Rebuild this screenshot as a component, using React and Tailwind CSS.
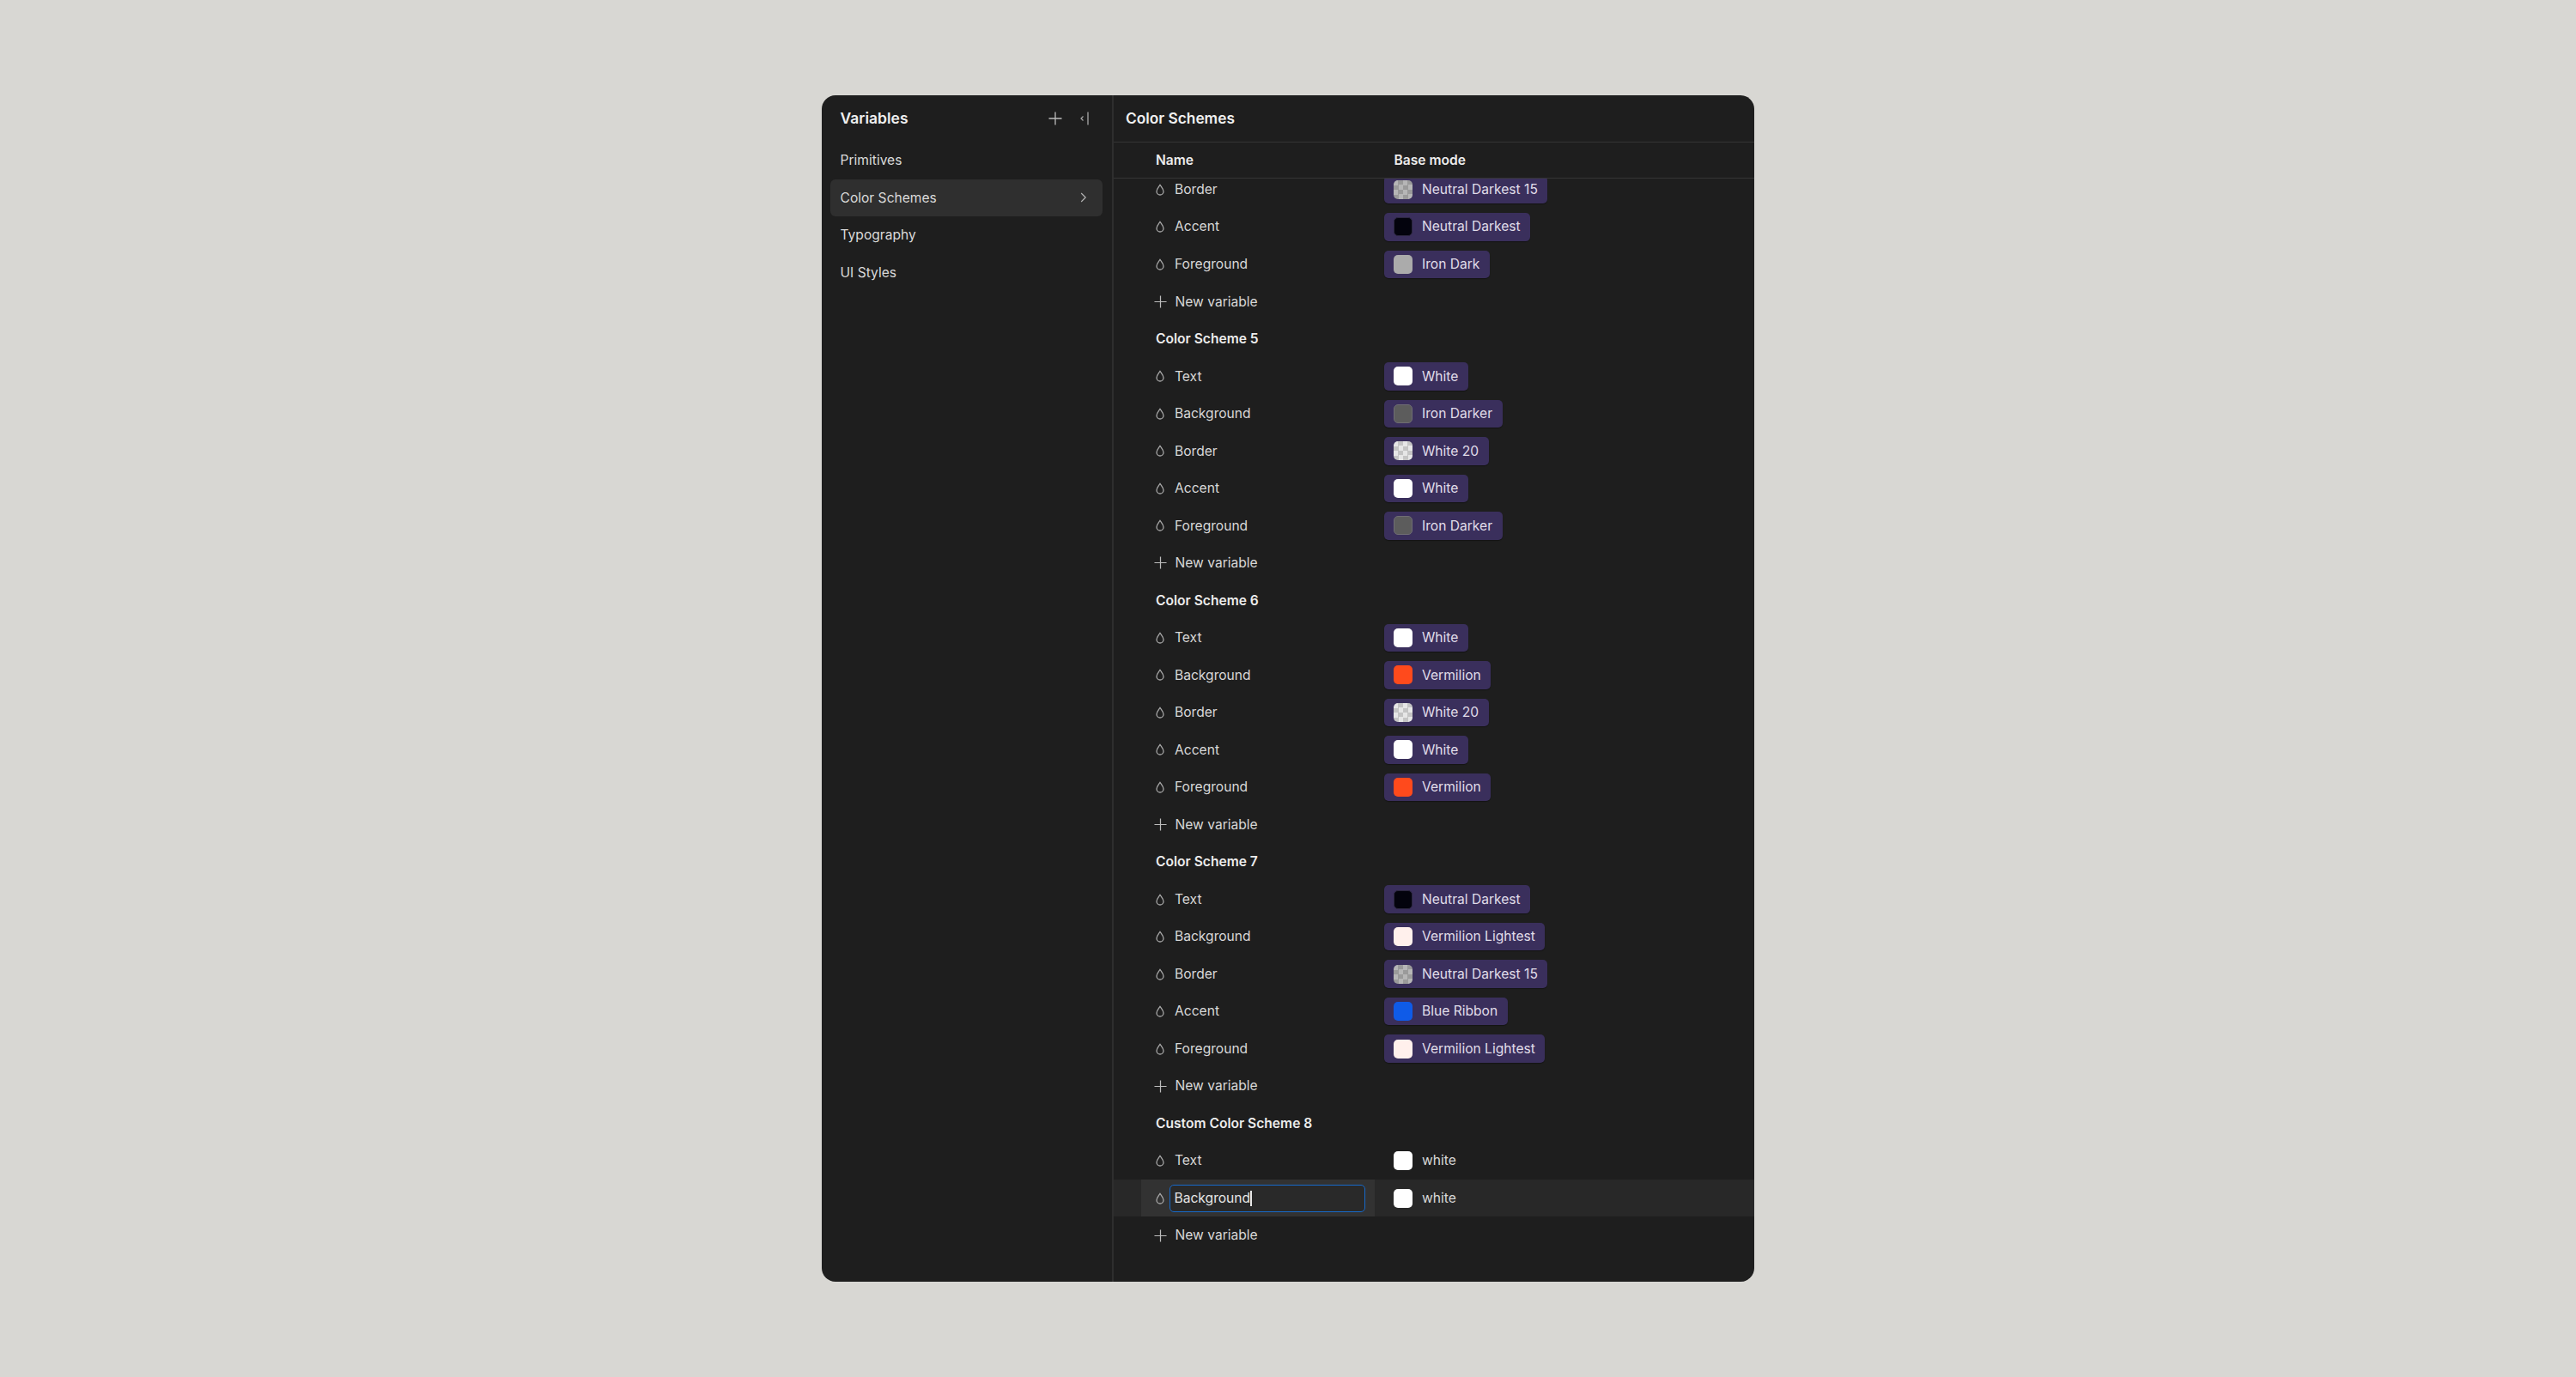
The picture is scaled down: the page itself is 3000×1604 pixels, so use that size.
const FONT = "font-['Inter','Liberation_Sans',sans-serif]";

function Drop() {
  return (
    <svg width="10" height="14" viewBox="0 0 10 14" fill="none" className="shrink-0">
      <path d="M5 1.2C4.2 2.9 1 6 1 9a4 4 0 0 0 8 0C9 6 5.8 2.9 5 1.2Z" stroke="#a8a8a8" strokeWidth="1.3" strokeLinejoin="round" />
    </svg>
  );
}

function Plus({ size = 15, color = "#bcbcbc" }) {
  return (
    <svg width={size} height={size} viewBox="0 0 16 16" fill="none" className="shrink-0">
      <path d="M8 0.5V15.5M0.5 8H15.5" stroke={color} strokeWidth="1.3" />
    </svg>
  );
}

function Swatch({ kind }) {
  const map = {
    white: "bg-white",
    dark: "bg-[#03030d] border border-[#2c2740]",
    iron: "bg-[#ababab]",
    ironDarker: "bg-[#5c5c5c] border border-[#6f6d74]",
    vermilion: "bg-[#ff4a1c]",
    lightest: "bg-[#fff0ec]",
    blue: "bg-[#0f5be8]",
    checkGray: "bg-[repeating-conic-gradient(#9a9a9a_0_25%,#b6b6b6_0_50%)] bg-[length:11px_11px]",
    checkWhite: "bg-[repeating-conic-gradient(#c4c4c4_0_25%,#e6e6e6_0_50%)] bg-[length:11px_11px]",
  };
  return <span className={`block w-[22px] h-[22px] rounded-[5px] shrink-0 ${map[kind]}`} />;
}

function Value({ kind, label, chip = true }) {
  if (!chip) {
    return (
      <div className="flex items-center gap-[11px] pl-[11px] h-[32.5px] text-[#d8d8d8]">
        <Swatch kind={kind} />
        <span>{label}</span>
      </div>
    );
  }
  return (
    <div className="flex items-center gap-[11px] pl-[11px] pr-[11.5px] h-[32.5px] rounded-[5px] bg-[#3a2f5c] shadow-[0_1px_1px_rgba(0,0,0,0.35)] text-[#e0dde9]">
      <Swatch kind={kind} />
      <span className="whitespace-nowrap">{label}</span>
    </div>
  );
}

function Row({ name, kind, label, chip, editing }) {
  return (
    <div className={`flex h-[43.52px] items-center ${editing ? "bg-[#282828]" : ""}`}>
      <div className={`ml-[32px] w-[272px] h-full flex items-center pl-[17px] ${editing ? "bg-[#323232]" : ""}`}>
        <Drop />
        {editing ? (
          <div className="ml-[6px] w-[228px] h-[32px] rounded-[5px] border-[1.5px] border-[#1769c9] bg-[#292929] flex items-center pl-[4.5px] text-[#e6e6e6]">
            <span>{name}</span>
            <span className="block w-[1.5px] h-[18px] bg-[#e6e6e6]" />
          </div>
        ) : (
          <span className="text-[#d8d8d8] ml-[12px]">{name}</span>
        )}
      </div>
      <div className="ml-[11px] flex">
        <Value kind={kind} label={label} chip={chip} />
      </div>
    </div>
  );
}

function NewVar() {
  return (
    <div className="flex h-[43.52px] items-center pl-[47px] gap-[9.5px] text-[#d8d8d8]">
      <Plus size={15} />
      <span>New variable</span>
    </div>
  );
}

function Heading({ children }) {
  return <div className="flex h-[43.52px] items-center pl-[49px] font-semibold text-[#ececec]">{children}</div>;
}

function Scheme({ title, rows }) {
  return (
    <>
      <Heading>{title}</Heading>
      {rows.map((r) => (
        <Row key={r[0]} name={r[0]} kind={r[1]} label={r[2]} />
      ))}
      <NewVar />
    </>
  );
}

const nav = ["Primitives", "Color Schemes", "Typography", "UI Styles"];

export default function App() {
  return (
    <div className={`${FONT} min-h-[1604px] bg-[#d8d7d3] flex items-center justify-center text-[15.6px] leading-none`}>
      <div className="w-[1086px] h-[1382px] rounded-[16px] bg-[#1e1e1e] flex overflow-hidden">
        <aside className="w-[340px] shrink-0 border-r-2 border-[#2e2e2e]">
          <div className="h-[54px] flex items-center pl-[21.5px] pr-[27px]">
            <span className="font-semibold text-[17.5px] text-[#f0f0f0]">Variables</span>
            <div className="ml-auto flex items-center gap-[20px]">
              <Plus size={16} />
              <svg width="11" height="16" viewBox="0 0 11 16" fill="none">
                <path d="M4.5 5.5L2 8L4.5 10.5" stroke="#a8a8a8" strokeWidth="1.2" />
                <path d="M10 0.5V15.5" stroke="#b4b4b4" strokeWidth="1.2" />
              </svg>
            </div>
          </div>
          <nav className="pl-[10px] pr-[11px]">
            {nav.map((n) => (
              <div
                key={n}
                className={`h-[43.6px] flex items-center pl-[11.5px] pr-[18px] rounded-[6px] text-[#dadada] ${n === "Color Schemes" ? "bg-[#2f2f2f]" : ""}`}
              >
                <span>{n}</span>
                {n === "Color Schemes" && (
                  <svg width="8" height="12" viewBox="0 0 8 12" fill="none" className="ml-auto">
                    <path d="M1.2 1L6.2 6L1.2 11" stroke="#b0b0b0" strokeWidth="1.2" />
                  </svg>
                )}
              </div>
            ))}
          </nav>
        </aside>
        <main className="flex-1 min-w-0 flex flex-col">
          <div className="h-[55px] shrink-0 flex items-center pl-[14px] border-b border-[#353535]">
            <span className="font-semibold text-[17.3px] text-[#f0f0f0]">Color Schemes</span>
          </div>
          <div className="h-[42px] shrink-0 flex items-center pl-[49px] border-b border-[#353535] font-semibold text-[#ececec]">
            <span className="w-[277.5px]">Name</span>
            <span>Base mode</span>
          </div>
          <div className="flex-1 overflow-hidden">
            <div className="-mt-[9px]">
              <Row name="Border" kind="checkGray" label="Neutral Darkest 15" />
              <Row name="Accent" kind="dark" label="Neutral Darkest" />
              <Row name="Foreground" kind="iron" label="Iron Dark" />
              <NewVar />
              <Scheme
                title="Color Scheme 5"
                rows={[
                  ["Text", "white", "White"],
                  ["Background", "ironDarker", "Iron Darker"],
                  ["Border", "checkWhite", "White 20"],
                  ["Accent", "white", "White"],
                  ["Foreground", "ironDarker", "Iron Darker"],
                ]}
              />
              <Scheme
                title="Color Scheme 6"
                rows={[
                  ["Text", "white", "White"],
                  ["Background", "vermilion", "Vermilion"],
                  ["Border", "checkWhite", "White 20"],
                  ["Accent", "white", "White"],
                  ["Foreground", "vermilion", "Vermilion"],
                ]}
              />
              <Scheme
                title="Color Scheme 7"
                rows={[
                  ["Text", "dark", "Neutral Darkest"],
                  ["Background", "lightest", "Vermilion Lightest"],
                  ["Border", "checkGray", "Neutral Darkest 15"],
                  ["Accent", "blue", "Blue Ribbon"],
                  ["Foreground", "lightest", "Vermilion Lightest"],
                ]}
              />
              <Heading>Custom Color Scheme 8</Heading>
              <Row name="Text" kind="white" label="white" chip={false} />
              <Row name="Background" kind="white" label="white" chip={false} editing />
              <NewVar />
            </div>
          </div>
        </main>
      </div>
    </div>
  );
}
